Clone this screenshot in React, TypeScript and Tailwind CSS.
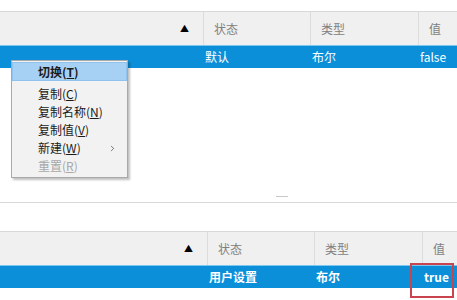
import { ChevronRight } from 'lucide-react';

const font = { fontFamily: '"Noto Sans CJK SC", "Noto Sans", sans-serif' };

type Cols = [number, number, number];

// 表头：排序箭头 + 状态 / 类型 / 值
const Header = ({ cols }: { cols: Cols }) => (
  <div className="flex h-[33px] bg-[#f0f0f0] text-[12px] text-[#808080]">
    <div className="flex items-center justify-end pr-[14px]" style={{ width: cols[0] }}>
      <span className="text-[9px] text-black">▲</span>
    </div>
    <div className="flex items-center border-l border-[#dcdcdc] pl-[10px]" style={{ width: cols[1] }}>
      状态
    </div>
    <div className="flex items-center border-l border-[#dcdcdc] pl-[10px]" style={{ width: cols[2] }}>
      类型
    </div>
    <div className="flex flex-1 items-center border-l border-[#dcdcdc] pl-[10px]">值</div>
  </div>
);

const Row = ({ cols, a, b, c, bold }: { cols: Cols; a: string; b: string; c: string; bold?: boolean }) => (
  <div
    className={`flex h-[23px] items-center border-t border-[#7cc7f0] bg-[#0a8fd8] text-[12px] text-white ${
      bold ? 'font-bold' : ''
    }`}
  >
    <div style={{ width: cols[0] }} />
    <div className="pl-[2px]" style={{ width: cols[1] }}>{a}</div>
    <div className="pl-[2px]" style={{ width: cols[2] }}>{b}</div>
    <div className="flex-1 pl-[2px]">{c}</div>
  </div>
);

const MenuItem = ({ label, acc, disabled, sub }: { label: string; acc: string; disabled?: boolean; sub?: boolean }) => (
  <div className={`flex h-[18px] items-center pl-[26px] pr-[10px] ${disabled ? 'text-[#a8a8a8]' : 'text-[#1a1a1a]'}`}>
    <span className="flex-1">
      {label}(<span className="underline">{acc}</span>)
    </span>
    {sub && <ChevronRight size={9} strokeWidth={1.5} />}
  </div>
);

export default function App() {
  const topCols: Cols = [203, 107, 108];
  const botCols: Cols = [207, 107, 108];

  return (
    <div className="relative h-[300px] w-[457px] overflow-hidden bg-white" style={font}>
      <div className="h-[12px] border-b border-[#d8d8d8]" />
      <Header cols={topCols} />
      <Row cols={topCols} a="默认" b="布尔" c="false" />

      <div className="relative h-[135px] border-b border-[#d8d8d8]">
        <div className="absolute bottom-[5px] left-[276px] h-px w-[12px] bg-[#c8c8c8]" />
      </div>
      <div className="h-[29px] border-b border-[#d8d8d8]" />

      <Header cols={botCols} />
      <Row cols={botCols} a="用户设置" b="布尔" c="true" bold />

      {/* 右键菜单 */}
      <div className="absolute left-[11px] top-[60px] h-[118px] w-[117px] border border-[#a9a9a9] bg-[#f2f2f2] py-px text-[12px] shadow-[2px_2px_2px_rgba(0,0,0,0.25)]">
        <div className="flex h-[19px] items-center border border-[#8fc3ee] bg-[#a6d1f5] pl-[25px] font-bold text-[#1a1a1a]">
          切换(<span className="underline">T</span>)
        </div>
        <div className="h-[4px]" />
        <MenuItem label="复制" acc="C" />
        <MenuItem label="复制名称" acc="N" />
        <MenuItem label="复制值" acc="V" />
        <MenuItem label="新建" acc="W" sub />
        <MenuItem label="重置" acc="R" disabled />
      </div>

      {/* 高亮框 */}
      <div className="absolute left-[410px] top-[263px] h-[35px] w-[44px] border-2 border-[#c84550]" />
    </div>
  );
}
